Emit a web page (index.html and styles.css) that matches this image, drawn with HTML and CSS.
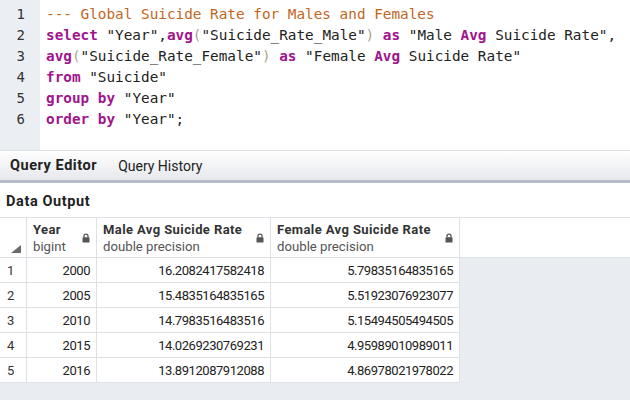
FILE: index.html
```html
<!DOCTYPE html>
<html>
<head>
<meta charset="utf-8">
<link rel="stylesheet" href="styles.css">
</head>
<body>
<div class="editor">
  <div class="gutter">
    <div>1</div><div>2</div><div>3</div><div>4</div><div>5</div><div>6</div>
  </div>
  <div class="code">
    <div class="ln"><span class="cm">--- Global Suicide Rate for Males and Females</span></div>
    <div class="ln"><span class="kw">select</span> "Year",<span class="kw">avg</span><span class="br">(</span>"Suicide_Rate_Male"<span class="br">)</span> <span class="kw">as</span> "Male <span class="kw">Avg</span> Suicide Rate",</div>
    <div class="ln"><span class="kw">avg</span><span class="br">(</span>"Suicide_Rate_Female"<span class="br">)</span> <span class="kw">as</span> "Female <span class="kw">Avg</span> Suicide Rate"</div>
    <div class="ln"><span class="kw">from</span> "Suicide"</div>
    <div class="ln"><span class="kw">group</span> <span class="kw">by</span> "Year"</div>
    <div class="ln"><span class="kw">order</span> <span class="kw">by</span> "Year";</div>
  </div>
</div>
<div class="tabs">
  <span class="tab active">Query Editor</span>
  <span class="tab">Query History</span>
</div>
<div class="out-title">Data Output</div>
<div class="grid">
  <div class="row head">
    <div class="c c0"><span class="corner"></span></div>
    <div class="c c1"><div class="hn"><b>Year</b><span>bigint</span></div><svg class="lock" viewBox="0 0 8 10"><path d="M2 4.5V3.1a2 2 0 0 1 4 0v1.4" fill="none" stroke="#555" stroke-width="1.3"/><rect x="0.5" y="4.3" width="7" height="5.2" rx="0.6" fill="#555"/></svg></div>
    <div class="c c2"><div class="hn"><b>Male Avg Suicide Rate</b><span>double precision</span></div><svg class="lock" viewBox="0 0 8 10"><path d="M2 4.5V3.1a2 2 0 0 1 4 0v1.4" fill="none" stroke="#555" stroke-width="1.3"/><rect x="0.5" y="4.3" width="7" height="5.2" rx="0.6" fill="#555"/></svg></div>
    <div class="c c3"><div class="hn"><b>Female Avg Suicide Rate</b><span>double precision</span></div><svg class="lock" viewBox="0 0 8 10"><path d="M2 4.5V3.1a2 2 0 0 1 4 0v1.4" fill="none" stroke="#555" stroke-width="1.3"/><rect x="0.5" y="4.3" width="7" height="5.2" rx="0.6" fill="#555"/></svg></div>
    <div class="fill"></div>
  </div>
  <div class="row"><div class="c c0">1</div><div class="c c1">2000</div><div class="c c2">16.2082417582418</div><div class="c c3">5.79835164835165</div></div>
  <div class="row"><div class="c c0">2</div><div class="c c1">2005</div><div class="c c2">15.4835164835165</div><div class="c c3">5.51923076923077</div></div>
  <div class="row"><div class="c c0">3</div><div class="c c1">2010</div><div class="c c2">14.7983516483516</div><div class="c c3">5.15494505494505</div></div>
  <div class="row"><div class="c c0">4</div><div class="c c1">2015</div><div class="c c2">14.0269230769231</div><div class="c c3">4.95989010989011</div></div>
  <div class="row"><div class="c c0">5</div><div class="c c1">2016</div><div class="c c2">13.8912087912088</div><div class="c c3">4.86978021978022</div></div>
</div>
</body>
</html>
```
FILE: styles.css
```css
* { box-sizing: border-box; }
html, body { margin: 0; padding: 0; }
body {
  width: 630px;
  height: 400px;
  overflow: hidden;
  background: #e9ecf1;
  font-family: Roboto, "Liberation Sans", sans-serif;
  color: #222;
}
.editor {
  display: flex;
  height: 150px;
  background: #fff;
}
.gutter {
  width: 40px;
  background: #ebeef3;
  padding-top: 4px;
  padding-right: 15px;
  text-align: right;
  font-family: "DejaVu Sans Mono", monospace;
  font-size: 14px;
  line-height: 21px;
  color: #333;
}
.code {
  flex: 1;
  padding-top: 4px;
  padding-left: 6px;
  font-family: "DejaVu Sans Mono", monospace;
  font-size: 14.35px;
  line-height: 21px;
  color: #222;
}
.ln { white-space: pre; }
.cm { color: #c2661e; }
.kw { color: #a0148c; font-weight: bold; }
.br { color: #a9a68c; }
.tabs {
  height: 33px;
  border-top: 1px solid #dcdfe6;
  border-bottom: 3px solid #b5bbc7;
  background: linear-gradient(#ffffff, #e6e8ec);
  display: flex;
  align-items: center;
  padding-left: 10px;
  gap: 21px;
  font-size: 14px;
  color: #222;
}
.tab.active { font-weight: bold; font-size: 14.5px; letter-spacing: 0.55px; }
.out-title {
  height: 34px;
  background: #fff;
  padding-left: 6px;
  padding-top: 10px;
  font-weight: bold;
  font-size: 14.5px;
  letter-spacing: 0.6px;
  color: #222;
}
.grid {
  border-top: 1px solid #dde0e6;
}
.row {
  display: flex;
  height: 25px;
  border-bottom: 1px solid #dde0e6;
  width: 460px;
  background: #fff;
}
.row.head {
  height: 40px;
  width: 630px;
}
.c {
  border-right: 1px solid #dde0e6;
  font-size: 13px;
  letter-spacing: -0.45px;
  display: flex;
  align-items: center;
  justify-content: flex-end;
  padding: 0 6px;
  color: #222;
}
.c0 { width: 27px; justify-content: flex-start; padding-left: 7px; color: #333; letter-spacing: 0; }
.c1 { width: 70px; }
.c2 { width: 174px; }
.c3 { width: 189px; }
.head .c {
  justify-content: space-between;
  align-items: center;
  padding: 0 6px 0 6px;
  position: relative;
  letter-spacing: 0;
}
.head .c0 { padding: 0; }
.hn {
  display: flex;
  flex-direction: column;
  line-height: 17px;
  padding-top: 1px;
}
.hn b { font-size: 13px; letter-spacing: 0.4px; color: #333; }
.hn span { font-size: 13.2px; color: #555; }
.lock { width: 8px; height: 10px; }
.fill { flex: 1; }
.corner {
  position: absolute;
  right: 5px;
  bottom: 4px;
  width: 0;
  height: 0;
  border-left: 10px solid transparent;
  border-bottom: 8px solid #6b6b6b;
}
```
